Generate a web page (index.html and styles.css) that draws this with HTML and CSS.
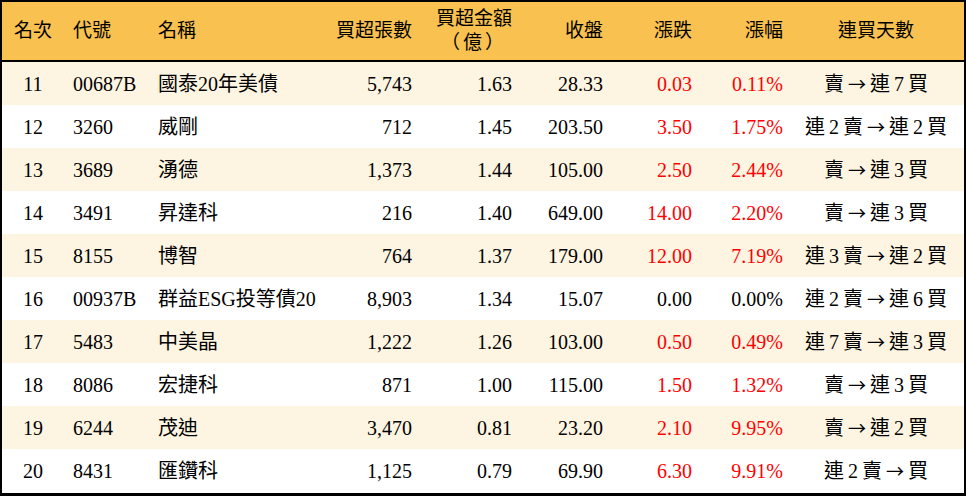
FILE: index.html
```html
<!DOCTYPE html>
<html lang="zh-Hant">
<head>
<meta charset="utf-8">
<link rel="stylesheet" href="styles.css">
</head>
<body>
<div class="frame">
<table class="rank">
  <colgroup>
    <col class="w1"><col class="w2"><col class="w3"><col class="w4"><col class="w5"><col class="w6"><col class="w7"><col class="w8"><col class="w9">
  </colgroup>
  <thead>
    <tr>
      <th class="c1">名次</th>
      <th class="c2">代號</th>
      <th class="c3">名稱</th>
      <th class="c4">買超張數</th>
      <th class="c5">買超金額<br><span class="unit">（億）</span></th>
      <th class="c6">收盤</th>
      <th class="c7">漲跌</th>
      <th class="c8">漲幅</th>
      <th class="c9">連買天數</th>
    </tr>
  </thead>
  <tbody>
    <tr><td class="c1">11</td><td class="c2">00687B</td><td class="c3">國泰20年美債</td><td class="c4">5,743</td><td class="c5">1.63</td><td class="c6">28.33</td><td class="c7 up">0.03</td><td class="c8 up">0.11%</td><td class="c9">賣 <span class="arr">→</span> 連 7 買</td></tr>
    <tr><td class="c1">12</td><td class="c2">3260</td><td class="c3">威剛</td><td class="c4">712</td><td class="c5">1.45</td><td class="c6">203.50</td><td class="c7 up">3.50</td><td class="c8 up">1.75%</td><td class="c9">連 2 賣 <span class="arr">→</span> 連 2 買</td></tr>
    <tr><td class="c1">13</td><td class="c2">3689</td><td class="c3">湧德</td><td class="c4">1,373</td><td class="c5">1.44</td><td class="c6">105.00</td><td class="c7 up">2.50</td><td class="c8 up">2.44%</td><td class="c9">賣 <span class="arr">→</span> 連 3 買</td></tr>
    <tr><td class="c1">14</td><td class="c2">3491</td><td class="c3">昇達科</td><td class="c4">216</td><td class="c5">1.40</td><td class="c6">649.00</td><td class="c7 up">14.00</td><td class="c8 up">2.20%</td><td class="c9">賣 <span class="arr">→</span> 連 3 買</td></tr>
    <tr><td class="c1">15</td><td class="c2">8155</td><td class="c3">博智</td><td class="c4">764</td><td class="c5">1.37</td><td class="c6">179.00</td><td class="c7 up">12.00</td><td class="c8 up">7.19%</td><td class="c9">連 3 賣 <span class="arr">→</span> 連 2 買</td></tr>
    <tr><td class="c1">16</td><td class="c2">00937B</td><td class="c3">群益ESG投等債20</td><td class="c4">8,903</td><td class="c5">1.34</td><td class="c6">15.07</td><td class="c7">0.00</td><td class="c8">0.00%</td><td class="c9">連 2 賣 <span class="arr">→</span> 連 6 買</td></tr>
    <tr><td class="c1">17</td><td class="c2">5483</td><td class="c3">中美晶</td><td class="c4">1,222</td><td class="c5">1.26</td><td class="c6">103.00</td><td class="c7 up">0.50</td><td class="c8 up">0.49%</td><td class="c9">連 7 賣 <span class="arr">→</span> 連 3 買</td></tr>
    <tr><td class="c1">18</td><td class="c2">8086</td><td class="c3">宏捷科</td><td class="c4">871</td><td class="c5">1.00</td><td class="c6">115.00</td><td class="c7 up">1.50</td><td class="c8 up">1.32%</td><td class="c9">賣 <span class="arr">→</span> 連 3 買</td></tr>
    <tr><td class="c1">19</td><td class="c2">6244</td><td class="c3">茂迪</td><td class="c4">3,470</td><td class="c5">0.81</td><td class="c6">23.20</td><td class="c7 up">2.10</td><td class="c8 up">9.95%</td><td class="c9">賣 <span class="arr">→</span> 連 2 買</td></tr>
    <tr><td class="c1">20</td><td class="c2">8431</td><td class="c3">匯鑽科</td><td class="c4">1,125</td><td class="c5">0.79</td><td class="c6">69.90</td><td class="c7 up">6.30</td><td class="c8 up">9.91%</td><td class="c9">連 2 賣 <span class="arr">→</span> 買</td></tr>
  </tbody>
</table>
</div>
</body>
</html>
```

FILE: styles.css
```css
html, body {
  margin: 0;
  padding: 0;
  background: #ffffff;
}

.frame {
  width: 966px;
  height: 496px;
  box-sizing: border-box;
  border: 2px solid #000;
  border-bottom-width: 3px;
  background: #ffffff;
}

.rank {
  width: 962px;
  border-collapse: collapse;
  table-layout: fixed;
  font-family: "Liberation Serif", "Noto Sans CJK TC", serif;
  font-size: 20px;
  color: #000;
}

.w1 { width: 62px; }
.w2 { width: 86px; }
.w3 { width: 150px; }
.w4 { width: 130px; }
.w5 { width: 100px; }
.w6 { width: 90px; }
.w7 { width: 90px; }
.w8 { width: 90px; }
.w9 { width: 164px; }

.rank th {
  background: #f8c150;
  height: 59px;
  font-size: 19px;
  font-weight: normal;
  line-height: 22px;
  padding: 0 0 1px 0;
  border-bottom: 2px solid #000;
  box-sizing: border-box;
}

.unit {
  font-family: "Noto Sans CJK TC", sans-serif;
  letter-spacing: 3px;
  margin-right: 5px;
}

.rank td {
  height: 43px;
  padding: 0;
  line-height: 20px;
  white-space: nowrap;
}

.rank tbody tr:nth-child(odd) td {
  background: #fdf5e2;
}

.c1 { text-align: center; }
.c2 { text-align: left; padding-left: 9px !important; }
.c3 { text-align: left; padding-left: 8px !important; }
.c4 { text-align: right; padding-right: 18px !important; }
.c5 { text-align: right; padding-right: 18px !important; }
.c6 { text-align: right; padding-right: 17px !important; }
.c7 { text-align: right; padding-right: 18px !important; }
.c8 { text-align: right; padding-right: 17px !important; }
.c9 { text-align: center; padding-right: 12px !important; word-spacing: -1px; }

.arr {
  font-family: "Noto Sans CJK TC", sans-serif;
  font-size: 18px;
}

.up { color: #ff0000; }
```
